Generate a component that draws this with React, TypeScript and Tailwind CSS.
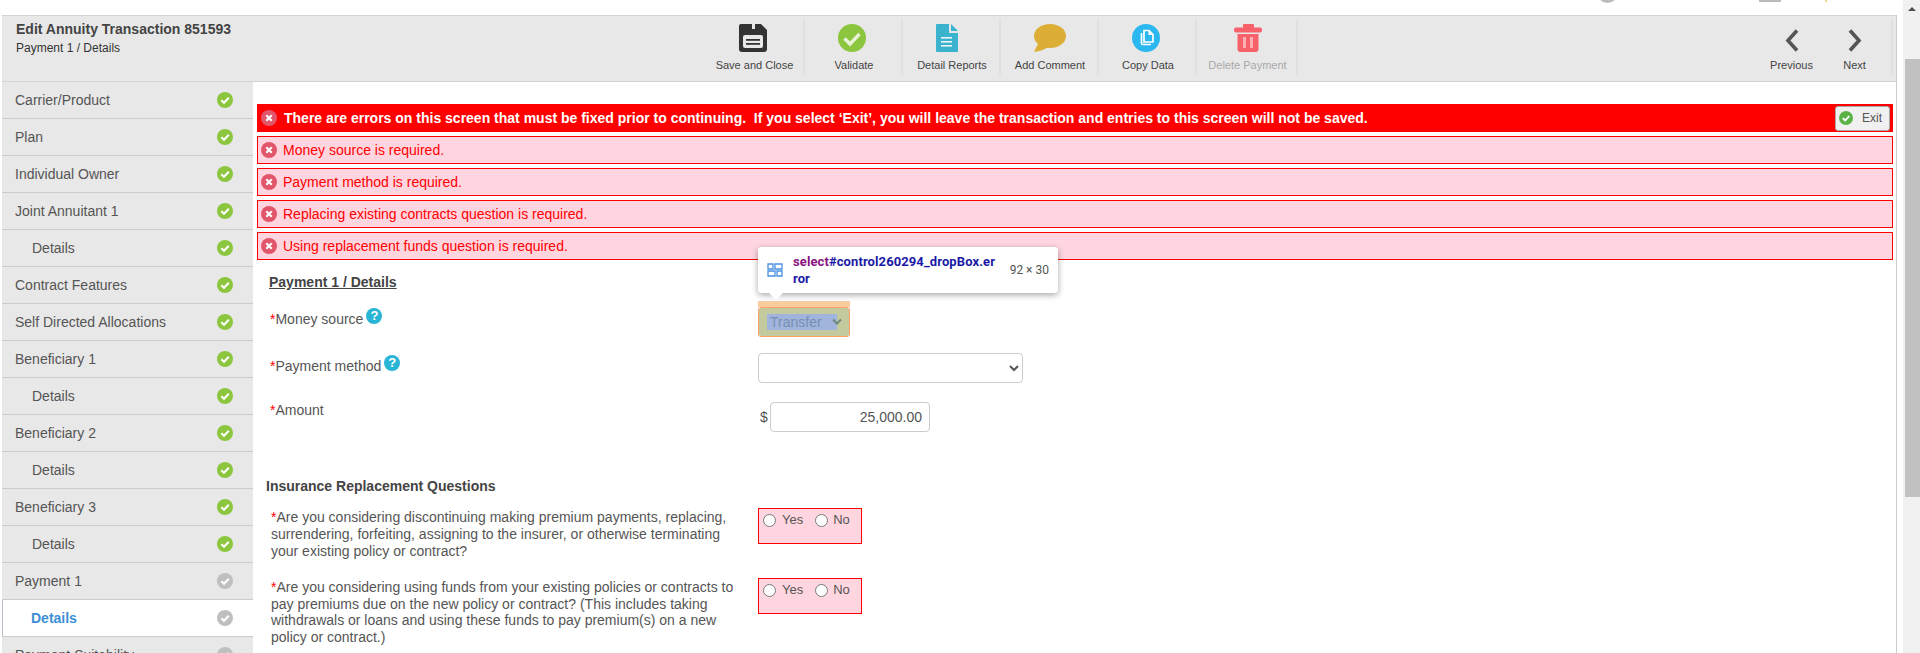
import type { ReactNode } from 'react'

const sideItems = [
  { label: 'Carrier/Product', done: true },
  { label: 'Plan', done: true },
  { label: 'Individual Owner', done: true },
  { label: 'Joint Annuitant 1', done: true },
  { label: 'Details', done: true, sub: true },
  { label: 'Contract Features', done: true },
  { label: 'Self Directed Allocations', done: true },
  { label: 'Beneficiary 1', done: true },
  { label: 'Details', done: true, sub: true },
  { label: 'Beneficiary 2', done: true },
  { label: 'Details', done: true, sub: true },
  { label: 'Beneficiary 3', done: true },
  { label: 'Details', done: true, sub: true },
  { label: 'Payment 1', done: false },
  { label: 'Details', done: false, sub: true, active: true },
  { label: 'Payment Suitability', done: false },
]

const errors = [
  'Money source is required.',
  'Payment method is required.',
  'Replacing existing contracts question is required.',
  'Using replacement funds question is required.',
]

function CheckDot({ color, size = 16 }: { color: string; size?: number }) {
  return (
    <svg width={size} height={size} viewBox="0 0 16 16" className="shrink-0">
      <circle cx="8" cy="8" r="8" fill={color} />
      <path d="M4.3 8.2 7 10.8 11.8 5.8" fill="none" stroke="#fff" strokeWidth="2" />
    </svg>
  )
}

function ErrorDot() {
  return (
    <svg width="16" height="16" viewBox="0 0 16 16" className="shrink-0">
      <circle cx="8" cy="8" r="8" fill="#e2566b" />
      <path d="M5.3 5.3 10.7 10.7M10.7 5.3 5.3 10.7" fill="none" stroke="#fff" strokeWidth="2.2" />
    </svg>
  )
}

function FloppyIcon() {
  return (
    <svg width="28" height="28" viewBox="0 0 28 28">
      <path d="M2 0H22L28 6V25a3 3 0 0 1-3 3H3a3 3 0 0 1-3-3V2a2 2 0 0 1 2-2Z" fill="#333" />
      <rect x="13" y="0" width="3" height="5" fill="#e8e8e8" />
      <rect x="4" y="11" width="20" height="13" rx="2" fill="#e8e8e8" />
      <rect x="7" y="15" width="14" height="1.8" fill="#333" />
      <rect x="7" y="19" width="14" height="1.8" fill="#333" />
    </svg>
  )
}

function ValidateIcon() {
  return (
    <svg width="28" height="28" viewBox="0 0 28 28">
      <circle cx="14" cy="14" r="14" fill="#8cc63f" />
      <path d="M6.5 14.5 12 20 21.5 10" fill="none" stroke="#e8f3da" strokeWidth="3.4" />
    </svg>
  )
}

function ReportIcon() {
  return (
    <svg width="22" height="28" viewBox="0 0 22 28">
      <path d="M1 0H13V9H22V27a1 1 0 0 1-1 1H1a1 1 0 0 1-1-1V1a1 1 0 0 1 1-1Z" fill="#3bb3ce" />
      <path d="M15 0 22 7H15Z" fill="#3bb3ce" />
      <rect x="5" y="13" width="11" height="1.6" fill="#e8f6fa" />
      <rect x="5" y="17" width="11" height="1.6" fill="#e8f6fa" />
      <rect x="5" y="21" width="11" height="1.6" fill="#e8f6fa" />
    </svg>
  )
}

function CommentIcon() {
  return (
    <svg width="32" height="28" viewBox="0 0 32 28">
      <ellipse cx="16" cy="12" rx="16" ry="12" fill="#dcae35" />
      <path d="M5 18 L0 28 Q9 27 14 23 Z" fill="#dcae35" />
    </svg>
  )
}

function CopyIcon() {
  return (
    <svg width="28" height="28" viewBox="0 0 28 28">
      <circle cx="14" cy="14" r="14" fill="#2bb8f0" />
      <path d="M12 6.5H17L21 10.5V18H12Z" fill="none" stroke="#fff" strokeWidth="1.7" />
      <path d="M16.5 6.5V11H21" fill="#fff" />
      <path d="M9.5 9V19a1.5 1.5 0 0 0 1.5 1.5H19" fill="none" stroke="#fff" strokeWidth="1.7" />
    </svg>
  )
}

function TrashIcon() {
  return (
    <svg width="28" height="28" viewBox="0 0 28 28">
      <rect x="9" y="0" width="11" height="4" rx="1" fill="#f7616a" />
      <rect x="0" y="3.5" width="28" height="5" rx="2" fill="#f7616a" />
      <path d="M3.5 10H24.5V25a3 3 0 0 1-3 3H6.5a3 3 0 0 1-3-3Z" fill="#f7616a" />
      <rect x="9" y="13" width="3" height="11" fill="#fbb0b4" />
      <rect x="16" y="13" width="3" height="11" fill="#fbb0b4" />
    </svg>
  )
}

const tools: { label: string; icon: ReactNode; width: string; shift: string; muted?: boolean }[] = [
  { label: 'Save and Close', icon: <FloppyIcon />, width: 'w-[99px]', shift: 'pr-[4px]' },
  { label: 'Validate', icon: <ValidateIcon />, width: 'w-[98px] pl-[2px]', shift: 'pr-[4px]' },
  { label: 'Detail Reports', icon: <ReportIcon />, width: 'w-[98px] pl-[2px]', shift: 'pr-[10px]' },
  { label: 'Add Comment', icon: <CommentIcon />, width: 'w-[98px] pl-[2px]', shift: 'pr-0' },
  { label: 'Copy Data', icon: <CopyIcon />, width: 'w-[98px] pl-[2px]', shift: 'pr-[4px]' },
  { label: 'Delete Payment', icon: <TrashIcon />, width: 'w-[101px] pl-[2px]', shift: 'pr-0', muted: true },
]

function ToolButton({ label, icon, width, shift, muted }: (typeof tools)[number]) {
  return (
    <div className={`${width} h-[56px] pt-[5px] flex flex-col items-center border-r-2 border-[#e0e0e0]`}>
      <div className={`h-[28px] flex justify-center ${shift}`}>{icon}</div>
      <span className={`mt-[7px] text-[11px] leading-[13px] ${muted ? 'text-[#a8a8a8]' : 'text-[#444]'}`}>{label}</span>
    </div>
  )
}

function NavButton({ label, d }: { label: string; d: string }) {
  return (
    <div className="w-[63px] pt-[10px] flex flex-col items-center">
      <svg width="14" height="23" viewBox="0 0 14 23">
        <path d={d} fill="none" stroke="#555" strokeWidth="3.6" />
      </svg>
      <span className="mt-[7px] text-[11px] leading-[13px] text-[#444]">{label}</span>
    </div>
  )
}

function HelpDot() {
  return (
    <span className="ml-[3px] -mt-[3px] w-[16px] h-[16px] rounded-full bg-[#2ab4d6] text-white text-[13px] leading-[16px] font-bold text-center">
      ?
    </span>
  )
}

function Req({ children }: { children: ReactNode }) {
  return (
    <>
      <span className="text-[#f00]">*</span>
      {children}
    </>
  )
}

function YesNo() {
  return (
    <div className="w-[104px] h-[36px] border border-[#f00] bg-[#ffd6e0] pl-[4px] pt-[4px] flex items-start text-[13px] leading-[14px] text-[#555]">
      <input type="radio" className="w-[13px] h-[13px] mt-[1px]" />
      <span className="ml-[6px]">Yes</span>
      <input type="radio" className="w-[13px] h-[13px] mt-[1px] ml-[12px]" />
      <span className="ml-[5px]">No</span>
    </div>
  )
}

export default function App() {
  return (
    <div className="relative h-[653px] w-[1920px] overflow-hidden bg-white flex text-[14px] leading-[17px] text-[#555] font-['Liberation_Sans',Arial,sans-serif]">
      {/* bits of the page above, cut off by the scroll position */}
      <div className="absolute left-[1597px] -top-[18px] w-[21px] h-[21px] rounded-full border-[3px] border-[#bbb]" />
      <div className="absolute left-[1759px] top-0 w-[22px] h-[2px] bg-[#bbb]" />
      <div className="absolute left-[1825px] top-0 w-[2px] h-[2px] bg-[#e8d98a]" />

      <div className="w-[1903px] pt-[15px] pl-[2px] pr-[6px]">
        <div className="h-[638px] border-r border-[#ccc] flex flex-col">
          <header className="h-[67px] shrink-0 border-y border-[#d4d4d4] bg-[#e8e8e8] flex">
            <div className="w-[704px] pl-[14px] pt-[5px]">
              <div className="font-bold text-[14px] leading-[16px] text-[#444]">Edit Annuity Transaction 851593</div>
              <div className="mt-[4px] text-[12px] leading-[14px] text-[#333]">Payment 1 / Details</div>
            </div>
            <div className="flex mt-[3px] h-[56px]">
              {tools.map((t) => (
                <ToolButton key={t.label} {...t} />
              ))}
            </div>
            <div className="ml-auto mr-[3px] mt-[3px] h-[56px] pr-[5px] flex border-r-2 border-[#e0e0e0]">
              <NavButton label="Previous" d="M12 1.5 3 11.5 12 21.5" />
              <NavButton label="Next" d="M2 1.5 11 11.5 2 21.5" />
            </div>
          </header>

          <div className="flex flex-1 min-h-0">
            <nav className="w-[251px] shrink-0 overflow-hidden">
              {sideItems.map((item, i) => (
                <div
                  key={i}
                  className={`h-[37px] flex items-center justify-between border-b border-[#ccc] pr-[20px] ${
                    item.active
                      ? 'bg-white border-l-2 border-l-[#b8bccc] -ml-[1px] pl-[28px] font-bold text-[#3b8fd6]'
                      : item.sub
                        ? 'pl-[30px] bg-[#e8e8e8] text-[#555]'
                        : 'pl-[13px] bg-[#e8e8e8] text-[#555]'
                  }`}
                >
                  <span>{item.label}</span>
                  <CheckDot color={item.done ? '#8cc63f' : '#bfbfbf'} />
                </div>
              ))}
            </nav>

            <main className="flex-1 min-w-0 pl-[4px] pr-[3px] pt-[22px]">
              <div className="h-[28px] bg-[#f00] pl-[4px] pr-[3px] flex items-center font-bold text-white">
                <ErrorDot />
                <span className="ml-[7px]">
                  There are errors on this screen that must be fixed prior to continuing.&nbsp; If you select ‘Exit’, you
                  will leave the transaction and entries to this screen will not be saved.
                </span>
                <button className="ml-auto w-[55px] h-[25px] rounded-[3px] border border-[#aaa] bg-[#f0f0f0] pl-[3px] flex items-center font-normal text-[12px] text-[#555]">
                  <CheckDot color="#5cb247" size={14} />
                  <span className="ml-[9px]">Exit</span>
                </button>
              </div>

              <div className="mt-[4px] flex flex-col gap-[4px]">
                {errors.map((e) => (
                  <div key={e} className="h-[28px] border border-[#f00] bg-[#ffd6e0] pl-[3px] flex items-center text-[#f00]">
                    <ErrorDot />
                    <span className="ml-[6px]">{e}</span>
                  </div>
                ))}
              </div>

              <div className="relative pl-[13px] pt-[14px]">
                <h2 className="-ml-[1px] font-bold underline text-[#444]">Payment 1 / Details</h2>

                <div className="mt-[16px] flex">
                  <div className="w-[488px] pt-[4px] flex items-start">
                    <span><Req>Money source</Req></span>
                    <HelpDot />
                  </div>
                  <div className="w-[92px] h-[30px] rounded-[3px] border border-[#ffa060] bg-[#c3ca9e] py-[5px] pl-[8px] pr-[7px] flex items-center justify-between bg-clip-padding">
                    <span className="flex-1 h-[16px] bg-[#a0b4de] leading-[16px] pl-[3px] text-[#7a90b0]">Transfer</span>
                    <svg width="10" height="8" viewBox="0 0 10 8" className="-ml-[5px]">
                      <path d="M1 1.5 5 5.5 9 1.5" fill="none" stroke="#6f8a80" strokeWidth="2" />
                    </svg>
                  </div>
                </div>

                <div className="mt-[16px] flex">
                  <div className="w-[488px] pt-[5px] flex items-start">
                    <span><Req>Payment method</Req></span>
                    <HelpDot />
                  </div>
                  <select className="w-[265px] h-[30px] rounded-[4px] border border-[#ccc] bg-white" />
                </div>

                <div className="mt-[19px] flex">
                  <div className="w-[488px]">
                    <Req>Amount</Req>
                  </div>
                  <span className="w-[12px] pl-[2px] pt-[7px]">$</span>
                  <input
                    readOnly
                    value="25,000.00"
                    className="w-[160px] h-[30px] rounded-[4px] border border-[#ccc] bg-white pr-[7px] text-right text-[#555]"
                  />
                </div>

                <h3 className="mt-[46px] -ml-[4px] font-bold text-[#444]">Insurance Replacement Questions</h3>

                <div className="mt-[13px] flex items-start">
                  <p className="w-[470px] mr-[17px] ml-[1px] pt-[1px]">
                    <Req>
                      Are you considering discontinuing making premium payments, replacing, surrendering, forfeiting,
                      assigning to the insurer, or otherwise terminating your existing policy or contract?
                    </Req>
                  </p>
                  <YesNo />
                </div>

                <div className="mt-[18px] flex items-start">
                  <p className="w-[470px] mr-[17px] ml-[1px] pt-[1px] leading-[16.7px]">
                    <Req>
                      Are you considering using funds from your existing policies or contracts to pay premiums due on the
                      new policy or contract? (This includes taking withdrawals or loans and using these funds to pay
                      premium(s) on a new policy or contract.)
                    </Req>
                  </p>
                  <YesNo />
                </div>

                {/* devtools element tooltip */}
                <div className="absolute left-[501px] -top-[13px] w-[300px] h-[46px] rounded-[3px] bg-white shadow-[0_2px_6px_rgba(0,0,0,0.35)] pl-[9px] pr-[9px] flex items-center font-['Roboto',sans-serif] text-[12px] leading-[17px]">
                  <svg width="16" height="14" viewBox="0 0 16 14" className="shrink-0" fill="none" stroke="#4a90e2" strokeWidth="1.3">
                    <path d="M1 1h5v5H1zM8 1h7v5H8zM1 8h7v5H1zM10 8h5v5h-5z" />
                  </svg>
                  <div className="ml-[10px] w-[203px] break-all font-bold text-[13px] tracking-[0.1px] text-[#1a1aa6]">
                    <span className="text-[#881280]">select</span>#control260294_dropBox.error
                  </div>
                  <span className="ml-auto text-[#555]">92 × 30</span>
                  <div className="absolute left-[11px] -bottom-[7px] w-0 h-0 border-x-[7px] border-x-transparent border-t-[7px] border-t-white" />
                </div>
                <div className="absolute left-[501px] top-[41px] w-[92px] h-[6px] bg-[#f9cc9d]" />
              </div>
            </main>
          </div>
        </div>
      </div>

      {/* scrollbar */}
      <div className="w-[17px] h-full bg-[#f1f1f1] flex flex-col items-end">
        <div className="w-full h-[59px] pt-[7px] pl-[5px]">
          <div className="w-0 h-0 border-x-[4px] border-x-transparent border-b-[4px] border-b-[#505050]" />
        </div>
        <div className="w-[15px] h-[438px] bg-[#c1c1c1]" />
      </div>
    </div>
  )
}
